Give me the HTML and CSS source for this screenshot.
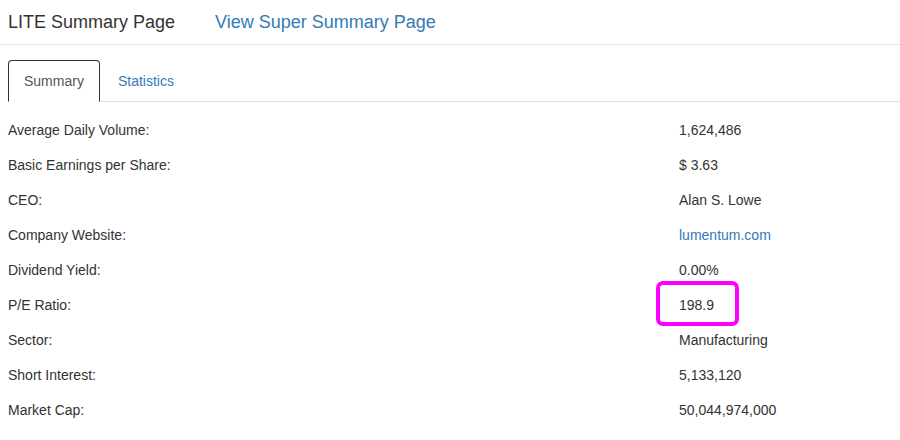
FILE: index.html
```html
<!DOCTYPE html>
<html>
<head>
<meta charset="utf-8">
<link rel="stylesheet" href="styles.css">
</head>
<body>
<div class="page">
  <header class="top">
    <span class="title">LITE Summary Page</span>
    <a class="super" href="#">View Super Summary Page</a>
  </header>
  <ul class="tabs">
    <li class="tab active"><a href="#">Summary</a></li>
    <li class="tab"><a href="#">Statistics</a></li>
  </ul>
  <div class="rows">
    <div class="row"><div class="label">Average Daily Volume:</div><div class="value">1,624,486</div></div>
    <div class="row"><div class="label">Basic Earnings per Share:</div><div class="value">$ 3.63</div></div>
    <div class="row"><div class="label">CEO:</div><div class="value">Alan S. Lowe</div></div>
    <div class="row"><div class="label">Company Website:</div><div class="value"><a href="#">lumentum.com</a></div></div>
    <div class="row"><div class="label">Dividend Yield:</div><div class="value">0.00%</div></div>
    <div class="row"><div class="label">P/E Ratio:</div><div class="value marked">198.9<span class="highlight"></span></div></div>
    <div class="row"><div class="label">Sector:</div><div class="value">Manufacturing</div></div>
    <div class="row"><div class="label">Short Interest:</div><div class="value">5,133,120</div></div>
    <div class="row"><div class="label">Market Cap:</div><div class="value">50,044,974,000</div></div>
  </div>
</div>
</body>
</html>
```
FILE: styles.css
```css
html, body {
  margin: 0;
  padding: 0;
  background: #fff;
}
body {
  font-family: "Liberation Sans", Arial, sans-serif;
  font-size: 14px;
  line-height: 20px;
  color: #333;
}
a {
  color: #337ab7;
  text-decoration: none;
}
.page {
  padding: 0 0 0 8px;
}
.top {
  height: 44px;
  display: flex;
  align-items: center;
  border-bottom: 1px solid #e5e5e5;
  margin-left: -8px;
  padding-left: 8px;
}
.title {
  font-size: 18px;
  color: #333;
}
.super {
  font-size: 18px;
  margin-left: 40px;
}
.tabs {
  list-style: none;
  margin: 15px 0 0 0;
  padding: 0;
  display: flex;
  border-bottom: 1px solid #ddd;
}
.tab {
  margin-right: 2px;
  margin-bottom: -1px;
}
.tab a {
  display: block;
  padding: 10px 15px;
  line-height: 20px;
  border: 1px solid transparent;
  border-radius: 4px 4px 0 0;
}
.tab.active a {
  color: #555;
  background: #fff;
  border-color: #333;
  border-bottom-color: transparent;
}
.rows {
  padding-top: 10px;
}
.row {
  display: grid;
  grid-template-columns: 671px 1fr;
  height: 35px;
  align-items: center;
}
.value {
  position: relative;
}
.highlight {
  position: absolute;
  left: -23px;
  top: -14px;
  width: 75px;
  height: 37px;
  border: 4px solid #ff00ff;
  border-radius: 7px;
}
```
